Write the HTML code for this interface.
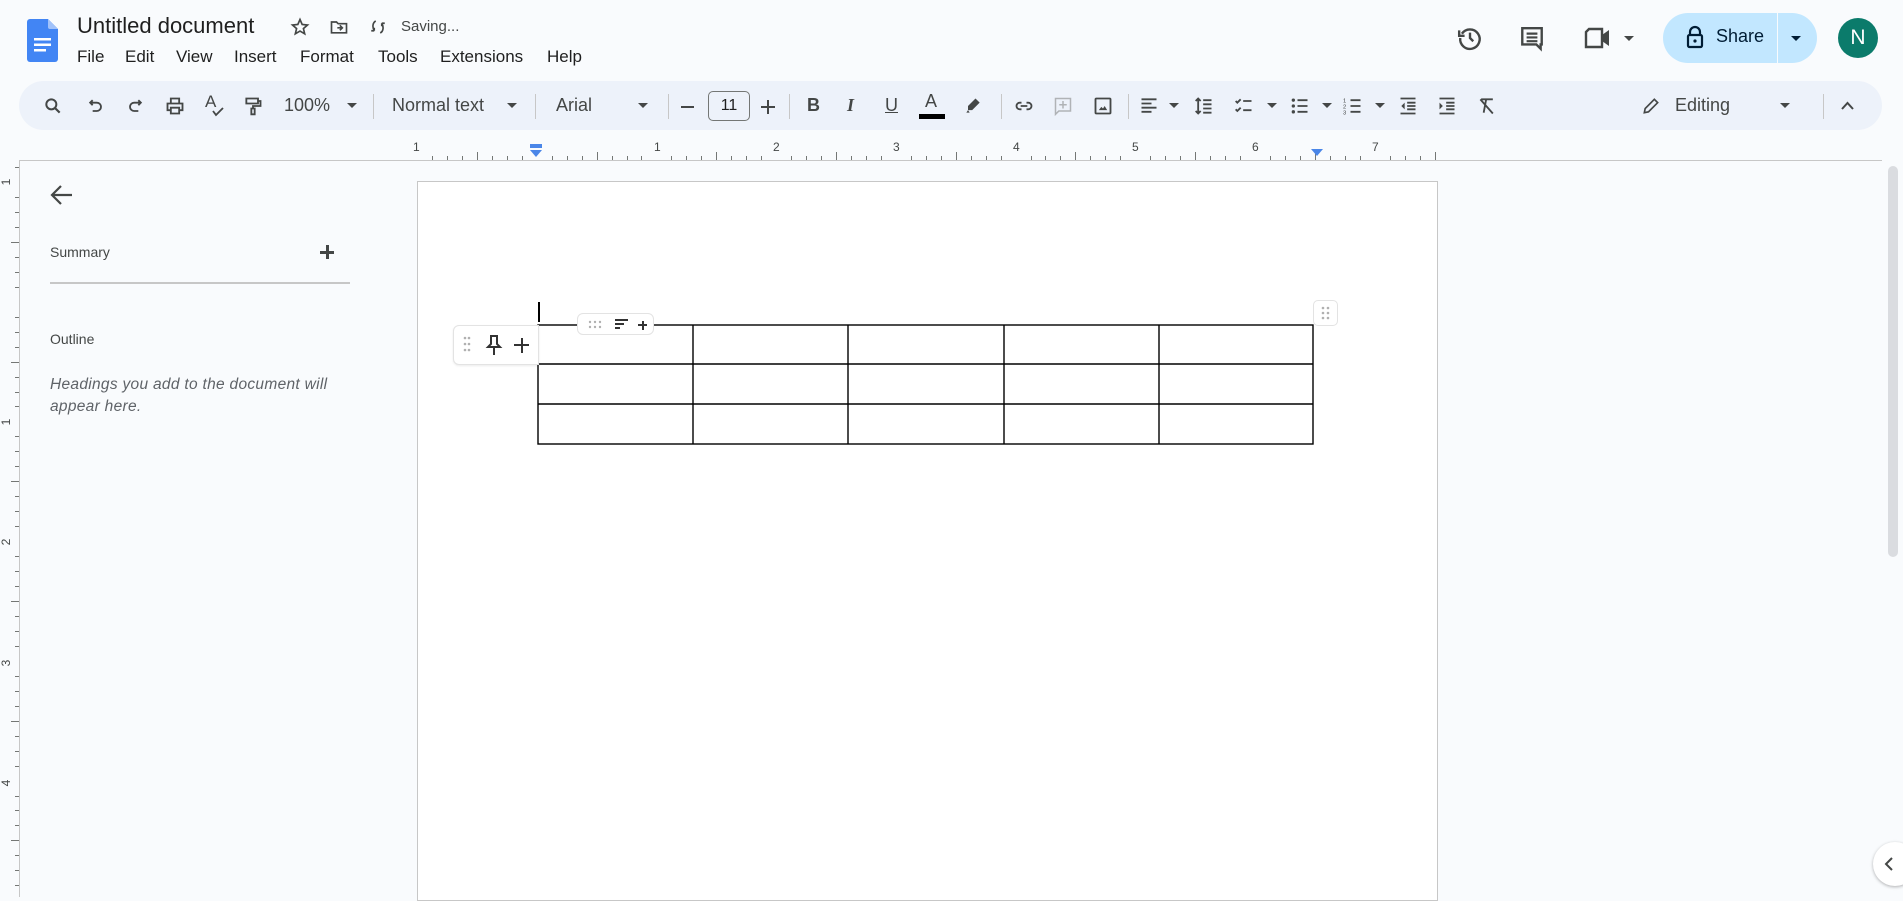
<!DOCTYPE html>
<html><head><meta charset="utf-8">
<style>
*{box-sizing:border-box;margin:0;padding:0}
body{width:1903px;height:897px;overflow:hidden;background:#f9fbfd;font-family:"Liberation Sans",Arial,sans-serif;color:#1f1f1f;position:relative}
.a{position:absolute}
.menu span{position:absolute;top:47px;font-size:17px;color:#1f1f1f}
.tb{position:absolute;left:19px;top:81px;width:1863px;height:49px;background:#edf2fa;border-radius:25px}
.ic{position:absolute;top:96px;width:20px;height:20px}
.t{position:absolute;top:95px;font-size:18px;color:#444746}
.car{position:absolute;top:103px;width:0;height:0;border-left:5px solid transparent;border-right:5px solid transparent;border-top:5px solid #444746}
.sep{position:absolute;top:94px;width:1px;height:25px;background:#c7c7c7}
svg{overflow:visible}
</style></head><body>
<!-- logo -->
<svg class="a" style="left:27px;top:19px" width="31" height="43" viewBox="0 0 31 43">
<path d="M3 0H21L31 10V40a3 3 0 0 1-3 3H3a3 3 0 0 1-3-3V3a3 3 0 0 1 3-3z" fill="#4285f4"/>
<path d="M21 0L31 10H23a2 2 0 0 1-2-2z" fill="#a1c2fa"/>
<rect x="7" y="19" width="17" height="2.5" fill="#fff"/><rect x="7" y="24.5" width="17" height="2.5" fill="#fff"/><rect x="7" y="30" width="12" height="2.5" fill="#fff"/>
</svg>
<div class="a" style="left:77px;top:13px;font-size:22px;color:#1f1f1f">Untitled document</div>
<svg class="a" style="left:290px;top:17px" width="20" height="20" viewBox="0 0 24 24"><path d="M12 3l2.6 6 6.4.6-4.9 4.3 1.5 6.3L12 16.9 6.4 20.2l1.5-6.3L3 9.6l6.4-.6z" fill="none" stroke="#444746" stroke-width="2"/></svg>
<svg class="a" style="left:329px;top:17px" width="20" height="20" viewBox="0 0 24 24"><path d="M3 6h6l2 2h10v11H3z" fill="none" stroke="#444746" stroke-width="2"/><path d="M10 13h6M13 10l3 3-3 3" fill="none" stroke="#444746" stroke-width="2"/></svg>
<svg class="a" style="left:369px;top:17px" width="18" height="20" viewBox="0 0 24 24"><path d="M9 4C5 6 4 12 7 17M7 17v-4M7 17H3M15 20c4-2 5-8 2-13M17 7v4M17 7h4" fill="none" stroke="#444746" stroke-width="2.2"/></svg>
<div class="a" style="left:401px;top:18px;font-size:15px;color:#444746">Saving...</div>
<div class="menu"><span style="left:77px">File</span><span style="left:125px">Edit</span><span style="left:176px">View</span><span style="left:234px">Insert</span><span style="left:300px">Format</span><span style="left:378px">Tools</span><span style="left:440px">Extensions</span><span style="left:547px">Help</span></div>

<!-- right header -->
<svg class="a" style="left:1457px;top:25px" width="26" height="26" viewBox="0 0 24 24"><path d="M4.5 8A9 9 0 1 1 3 12" fill="none" stroke="#444746" stroke-width="2.2"/><path d="M2 5v5h5" fill="none" stroke="#444746" stroke-width="2.2"/><path d="M12 7v5l3 3" fill="none" stroke="#444746" stroke-width="2.2"/></svg>
<svg class="a" style="left:1519px;top:25px" width="26" height="27" viewBox="0 0 24 25"><path d="M3 3h18v15h-1v4l-4-4H3z" fill="none" stroke="#444746" stroke-width="2.2"/><path d="M7 8h10M7 11.5h10M7 15h10" stroke="#444746" stroke-width="2"/></svg>
<svg class="a" style="left:1584px;top:26px" width="28" height="24" viewBox="0 0 28 24"><path d="M5 3h13v18H2V6z" fill="none" stroke="#444746" stroke-width="2.4"/><path d="M18 9l7-5v16l-7-5z" fill="#444746"/></svg>
<div class="car" style="left:1624px;top:36px"></div>
<div class="a" style="left:1663px;top:13px;width:154px;height:50px;background:#c2e7ff;border-radius:25px"></div>
<div class="a" style="left:1777px;top:13px;width:1px;height:50px;background:#f9fbfd"></div>
<svg class="a" style="left:1686px;top:26px" width="18" height="22" viewBox="0 0 18 22"><path d="M4 9V6a5 5 0 0 1 10 0v3" fill="none" stroke="#001d35" stroke-width="2.2"/><rect x="2" y="9" width="14" height="12" rx="1.5" fill="none" stroke="#001d35" stroke-width="2.2"/><circle cx="9" cy="15" r="1.6" fill="#001d35"/></svg>
<div class="a" style="left:1716px;top:26px;font-size:18px;color:#001d35">Share</div>
<div class="car" style="left:1791px;top:36px;border-top-color:#001d35"></div>
<div class="a" style="left:1838px;top:18px;width:40px;height:40px;border-radius:50%;background:#0b7b6b;color:#fff;font-size:21px;text-align:center;line-height:40px">N</div>

<!-- toolbar -->
<div class="tb"></div>
<svg class="ic" style="left:43px" viewBox="0 0 24 24"><circle cx="10" cy="10" r="6" fill="none" stroke="#444746" stroke-width="2.4"/><path d="M14.5 14.5L20 20" stroke="#444746" stroke-width="2.6"/></svg>
<svg class="ic" style="left:86px" viewBox="0 0 24 24"><path d="M8 5L5 8l3 3M5 8h8a5 5 0 0 1 0 10H8" fill="none" stroke="#444746" stroke-width="2.2"/></svg>
<svg class="ic" style="left:125px" viewBox="0 0 24 24"><path d="M16 5l3 3-3 3M19 8h-8a5 5 0 0 0 0 10h5" fill="none" stroke="#444746" stroke-width="2.2"/></svg>
<svg class="ic" style="left:165px" viewBox="0 0 24 24"><path d="M7 8V3h10v5M6 17H3V9h18v8h-3M7 14h10v7H7z" fill="none" stroke="#444746" stroke-width="2.2"/></svg>
<div class="t" style="left:205px;top:92px;font-size:17px">A</div><svg class="a" style="left:212px;top:107px" width="12" height="10" viewBox="0 0 12 10"><path d="M1 4l3 4 7-7" fill="none" stroke="#444746" stroke-width="1.8"/></svg>
<svg class="ic" style="left:243px" viewBox="0 0 24 24"><path d="M4 3h14v6H4zM18 6h3v6h-9v3M10 15h4v7h-4z" fill="none" stroke="#444746" stroke-width="2.2"/></svg>
<div class="t" style="left:284px">100%</div><div class="car" style="left:347px"></div>
<div class="sep" style="left:373px"></div>
<div class="t" style="left:392px">Normal text</div><div class="car" style="left:507px"></div>
<div class="sep" style="left:535px"></div>
<div class="t" style="left:556px">Arial</div><div class="car" style="left:638px"></div>
<div class="sep" style="left:668px"></div>
<div class="a" style="left:681px;top:106px;width:13px;height:2px;background:#444746"></div>
<div class="a" style="left:708px;top:91px;width:42px;height:30px;border:1px solid #747775;border-radius:5px;font-size:16px;text-align:center;line-height:28px;color:#1f1f1f">11</div>
<div class="a" style="left:761px;top:106px;width:14px;height:2px;background:#444746"></div><div class="a" style="left:767px;top:100px;width:2px;height:14px;background:#444746"></div>
<div class="sep" style="left:789px"></div>
<div class="t" style="left:807px;font-weight:bold">B</div>
<div class="t" style="left:847px;font-style:italic;font-family:'Liberation Serif',serif;font-weight:bold">I</div>
<div class="t" style="left:885px;text-decoration:underline">U</div>
<div class="t" style="left:925px;top:91px">A</div><div class="a" style="left:919px;top:114px;width:26px;height:5px;background:#000"></div>
<svg class="ic" style="left:963px" viewBox="0 0 24 24"><path d="M15 3l5 5-9 9H6v-5z" fill="#444746"/><path d="M6 17l-2 3h4z" fill="#444746"/></svg>
<div class="sep" style="left:1001px"></div>
<svg class="ic" style="left:1014px" viewBox="0 0 24 24"><path d="M9 8H7a4 4 0 0 0 0 8h2M15 8h2a4 4 0 0 1 0 8h-2M8 12h8" fill="none" stroke="#444746" stroke-width="2.2"/></svg>
<svg class="ic" style="left:1053px" viewBox="0 0 24 24"><path d="M3 3h18v15H7l-4 4z" fill="none" stroke="#b0b3b6" stroke-width="1.8"/><path d="M12 6v9M7.5 10.5h9" stroke="#b0b3b6" stroke-width="1.8"/></svg>
<svg class="ic" style="left:1093px" viewBox="0 0 24 24"><rect x="3" y="3" width="18" height="18" rx="1" fill="none" stroke="#444746" stroke-width="2.2"/><path d="M7 17l3-4 2 2 2-3 3 5z" fill="#444746"/></svg>
<div class="sep" style="left:1128px"></div>
<svg class="ic" style="left:1139px" viewBox="0 0 24 24"><path d="M3 4h18M3 9h12M3 14h18M3 19h12" stroke="#444746" stroke-width="2.2"/></svg><div class="car" style="left:1169px"></div>
<svg class="ic" style="left:1194px" viewBox="0 0 24 24"><path d="M5 3v18M2 6l3-3 3 3M2 18l3 3 3-3M11 5h10M11 10h10M11 15h10M11 20h10" fill="none" stroke="#444746" stroke-width="2.2"/></svg>
<svg class="ic" style="left:1234px" viewBox="0 0 24 24"><path d="M2 6l2 2 4-4M2 16l2 2 4-4M11 6h10M11 17h10" fill="none" stroke="#444746" stroke-width="2.2"/></svg><div class="car" style="left:1267px"></div>
<svg class="ic" style="left:1290px" viewBox="0 0 24 24"><circle cx="4" cy="5" r="2" fill="#444746"/><circle cx="4" cy="12" r="2" fill="#444746"/><circle cx="4" cy="19" r="2" fill="#444746"/><path d="M9 5h12M9 12h12M9 19h12" stroke="#444746" stroke-width="2.2"/></svg><div class="car" style="left:1322px"></div>
<svg class="ic" style="left:1343px" viewBox="0 0 24 24"><text x="0" y="8" font-size="7" fill="#444746">1</text><text x="0" y="15" font-size="7" fill="#444746">2</text><text x="0" y="22" font-size="7" fill="#444746">3</text><path d="M9 5h12M9 12h12M9 19h12" stroke="#444746" stroke-width="2.2"/></svg><div class="car" style="left:1375px"></div>
<svg class="ic" style="left:1398px" viewBox="0 0 24 24"><path d="M3 3h18M11 8h10M11 12h10M11 16h10M3 21h18" stroke="#444746" stroke-width="2.2"/><path d="M8 8l-4 4 4 4z" fill="#444746"/></svg>
<svg class="ic" style="left:1437px" viewBox="0 0 24 24"><path d="M3 3h18M11 8h10M11 12h10M11 16h10M3 21h18" stroke="#444746" stroke-width="2.2"/><path d="M3 8l4 4-4 4z" fill="#444746"/></svg>
<svg class="ic" style="left:1477px" viewBox="0 0 24 24"><path d="M5 4h14M11 4l-3 16M4 4l15 17" fill="none" stroke="#444746" stroke-width="2.2"/></svg>
<svg class="ic" style="left:1641px" viewBox="0 0 24 24"><path d="M4 20l1-5L16 4l4 4L9 19z" fill="none" stroke="#444746" stroke-width="2"/></svg>
<div class="t" style="left:1675px">Editing</div><div class="car" style="left:1780px"></div>
<div class="sep" style="left:1823px"></div>
<svg class="a" style="left:1841px;top:101px" width="13" height="9" viewBox="0 0 13 9"><path d="M1 8l5.5-6L12 8" fill="none" stroke="#444746" stroke-width="2"/></svg>

<!-- ruler -->
<div class="a" style="left:19px;top:160px;width:1863px;height:1px;background:#c7c7c7"></div>
<div id="hr" class="a" style="left:0;top:0"></div>
<svg class="a" style="left:529px;top:144px" width="14" height="14"><rect x="1" y="0" width="12" height="4" fill="#4a86e8"/><path d="M1 6h12l-6 7z" fill="#4a86e8"/></svg>
<svg class="a" style="left:1310px;top:148px" width="14" height="10"><path d="M1 1h12l-6 7z" fill="#4a86e8"/></svg>
<div class="a" style="left:19px;top:160px;width:1px;height:737px;background:#c7c7c7"></div>
<div id="vr" class="a" style="left:0;top:0"></div>

<!-- sidebar -->
<svg class="a" style="left:50px;top:184px" width="24" height="22" viewBox="0 0 24 22"><path d="M22 11H3M11 2l-9 9 9 9" fill="none" stroke="#444746" stroke-width="2.2"/></svg>
<div class="a" style="left:50px;top:244px;font-size:14px;color:#444746">Summary</div>
<div class="a" style="left:320px;top:251px;width:14px;height:2.5px;background:#444746"></div><div class="a" style="left:326px;top:245px;width:2.5px;height:14px;background:#444746"></div>
<div class="a" style="left:50px;top:282px;width:300px;height:2px;background:#c7c7c7"></div>
<div class="a" style="left:50px;top:331px;font-size:14px;color:#444746">Outline</div>
<div class="a" style="left:50px;top:374px;font-size:15.5px;font-style:italic;color:#5f6368;line-height:22px;letter-spacing:0.3px">Headings you add to the document will<br>appear here.</div>

<!-- page -->
<div class="a" style="left:417px;top:181px;width:1021px;height:720px;background:#fff;border:1px solid #c7c7c7"></div>
<div class="a" style="left:538px;top:302px;width:2px;height:20px;background:#000"></div>
<svg class="a" style="left:537px;top:324px" width="778" height="122">
<g stroke="#000" stroke-width="1.4" fill="none">
<rect x="1" y="1" width="775" height="119"/>
<path d="M1 40H776M1 80H776M156 1V120M311 1V120M467 1V120M622 1V120"/>
</g></svg>
<div class="a" style="left:453px;top:325px;width:86px;height:40px;background:#fff;border:1px solid #e3e3e3;border-radius:6px 0 0 6px;box-shadow:0 1px 2px rgba(0,0,0,.08)"></div>
<svg class="a" style="left:463px;top:336px" width="8" height="16"><g fill="#b0b0b0"><circle cx="2" cy="2" r="1.3"/><circle cx="6" cy="2" r="1.3"/><circle cx="2" cy="8" r="1.3"/><circle cx="6" cy="8" r="1.3"/><circle cx="2" cy="14" r="1.3"/><circle cx="6" cy="14" r="1.3"/></g></svg>
<svg class="a" style="left:486px;top:334px" width="16" height="22" viewBox="0 0 16 22"><path d="M4 2h8M5 2v8l-3 3h12l-3-3V2M8 13v8" fill="none" stroke="#333" stroke-width="2"/></svg>
<div class="a" style="left:514px;top:344px;width:15px;height:2px;background:#333"></div><div class="a" style="left:520.5px;top:337.5px;width:2px;height:15px;background:#333"></div>
<div class="a" style="left:577px;top:313px;width:77px;height:22px;background:#fff;border:1px solid #e3e3e3;border-radius:6px"></div>
<svg class="a" style="left:588px;top:320px" width="14" height="9"><g fill="#b0b0b0"><circle cx="2" cy="2" r="1.2"/><circle cx="7" cy="2" r="1.2"/><circle cx="12" cy="2" r="1.2"/><circle cx="2" cy="7" r="1.2"/><circle cx="7" cy="7" r="1.2"/><circle cx="12" cy="7" r="1.2"/></g></svg>
<svg class="a" style="left:615px;top:319px" width="14" height="12"><path d="M0 1h13M0 5h9M0 9h5" stroke="#333" stroke-width="2"/></svg>
<div class="a" style="left:638px;top:324px;width:9px;height:2px;background:#333"></div><div class="a" style="left:641.5px;top:320.5px;width:2px;height:9px;background:#333"></div>
<div class="a" style="left:1313px;top:300px;width:25px;height:26px;background:#fff;border:1px solid #e3e3e3;border-radius:5px"></div>
<svg class="a" style="left:1321px;top:306px" width="9" height="14"><g fill="#b0b0b0"><circle cx="2" cy="2" r="1.3"/><circle cx="7" cy="2" r="1.3"/><circle cx="2" cy="7" r="1.3"/><circle cx="7" cy="7" r="1.3"/><circle cx="2" cy="12" r="1.3"/><circle cx="7" cy="12" r="1.3"/></g></svg>

<!-- scrollbar -->
<div class="a" style="left:1888px;top:166px;width:10px;height:391px;background:#dadce0;border-radius:5px"></div>
<div class="a" style="left:1873px;top:842px;width:44px;height:44px;border-radius:50%;background:#fff;box-shadow:0 1px 3px rgba(0,0,0,.3)"></div>
<svg class="a" style="left:1884px;top:857px" width="10" height="14"><path d="M8 1L2 7l6 6" fill="none" stroke="#444746" stroke-width="2"/></svg>

<script>
var h='',L=417,R=1437,ppi=119.7;
for(var i=0;;i++){var x=L+i*ppi/8;if(x>R+1)break;var k=i%8;var len=k==0?0:(k==4?8:4);
 if(len)h+='<div class="a" style="left:'+x.toFixed(1)+'px;top:'+(160-len)+'px;width:1px;height:'+len+'px;background:#747775"></div>';}
var nums=[[416,'1'],[657,'1'],[776,'2'],[896,'3'],[1016,'4'],[1135,'5'],[1255,'6'],[1375,'7']];
nums.forEach(function(n){h+='<div class="a" style="left:'+(n[0]-3)+'px;top:140px;font-size:12px;color:#444746">'+n[1]+'</div>';});
document.getElementById('hr').innerHTML=h;
var v='';var T=182;
for(var i=-2;;i++){var y=T+i*ppi/8;if(y>897)break;if(y<165)continue;var k=((i%8)+8)%8;
 if(k==0)continue;var len=k==4?8:4;v+='<div class="a" style="left:'+(19-len)+'px;top:'+y.toFixed(1)+'px;width:'+len+'px;height:1px;background:#747775"></div>';}
[[182,'1'],[422,'1'],[542,'2'],[663,'3'],[783,'4']].forEach(function(n){v+='<div class="a" style="left:0px;top:'+(n[1]=='1'?n[0]-7:n[0]-7)+'px;font-size:12px;color:#444746;transform:rotate(-90deg);width:12px;text-align:center">'+n[1]+'</div>';});
document.getElementById('vr').innerHTML=v;
</script>
</body></html>
